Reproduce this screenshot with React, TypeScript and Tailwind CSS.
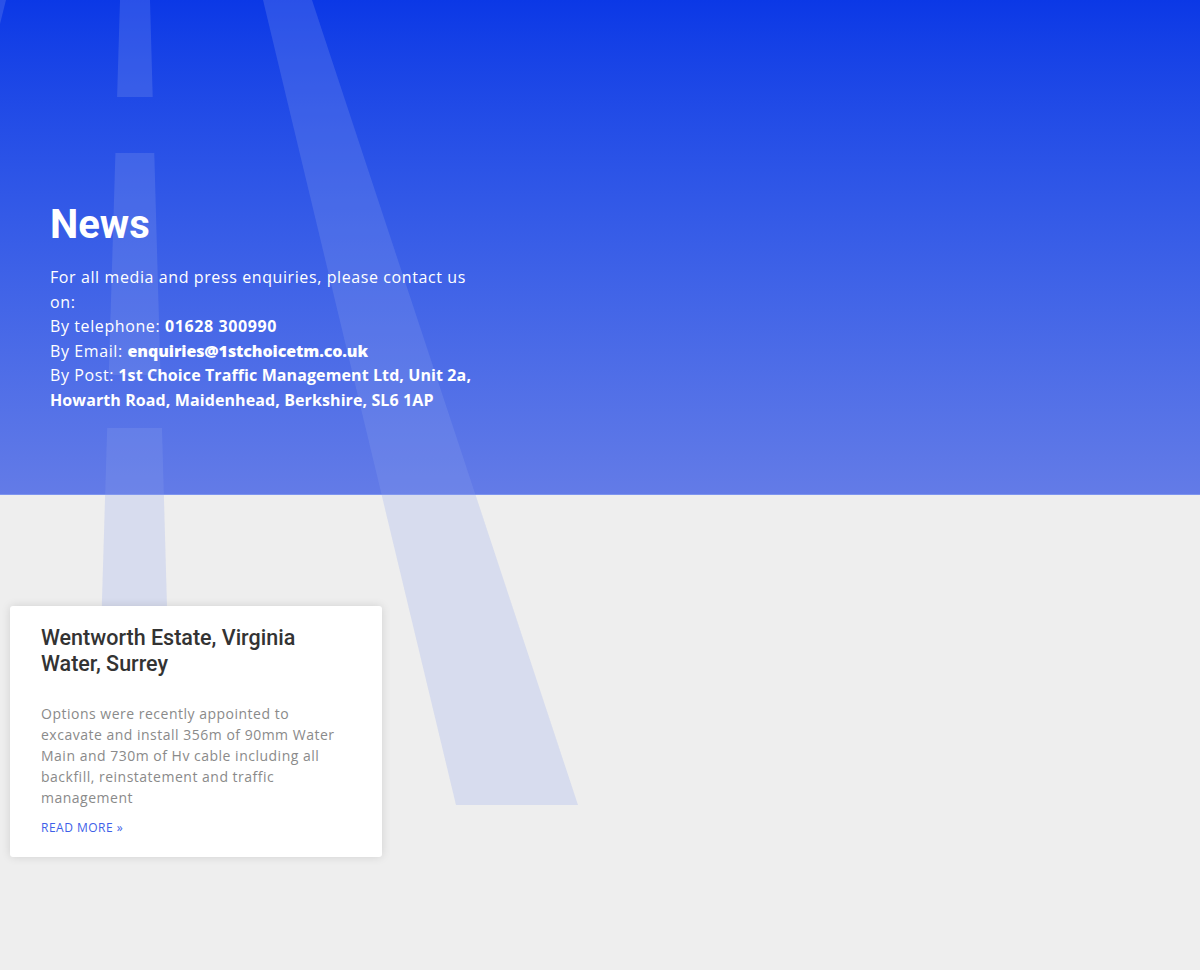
import React from 'react'

const body = { fontFamily: '"Open Sans", "Liberation Sans", sans-serif' }
const heading = { fontFamily: 'Roboto, "Liberation Sans", sans-serif' }

// dashed centre line widens slightly towards the bottom, kerb line runs off to the right
const DASHES: [number, number][] = [
  [0, 97],
  [153, 375],
  [428, 805],
]

function dashPoints(y1: number, y2: number) {
  const l = (y: number) => 120 - 0.03 * y
  const r = (y: number) => 150 + 0.028 * y
  return `${l(y1)},${y1} ${r(y1)},${y1} ${r(y2)},${y2} ${l(y2)},${y2}`
}

function RoadMarkings() {
  return (
    <svg
      className="pointer-events-none absolute left-0 top-0"
      width="600"
      height="805"
      viewBox="0 0 600 805"
    >
      <g fill="rgba(143,164,238,0.24)">
        {DASHES.map(([a, b]) => (
          <polygon key={a} points={dashPoints(a, b)} />
        ))}
        <polygon points="263,0 312,0 578,805 456,805" />
        <polygon points="0,0 6,0 0,24" />
      </g>
    </svg>
  )
}

export default function App() {
  return (
    <div className="relative min-h-[970px] bg-[#eeeeee]" style={body}>
      <section className="h-[495px] border-b border-[#7d94ee] bg-gradient-to-b from-[#0b38e6] to-[#637be7]" />
      <RoadMarkings />

      <div className="absolute left-0 top-[201px] w-[492px] pl-[50px] text-white">
        <h1 className="mb-[16px] text-[40px] font-bold leading-[48px]" style={heading}>
          News
        </h1>
        <div className="text-[16px] leading-[24.5px] tracking-[0.6px]">
          <p>For all media and press enquiries, please contact us on:</p>
          <p>
            By telephone: <strong className="font-bold">01628 300990</strong>
          </p>
          <p>
            By Email:{' '}
            <strong className="font-extrabold tracking-[-0.1px]">enquiries@1stchoicetm.co.uk</strong>
          </p>
          <p className="font-bold tracking-[0.1px]">
            <span className="font-normal tracking-[0.6px]">By Post:</span> 1st Choice Traffic
            Management Ltd, Unit 2a, Howarth Road, Maidenhead, Berkshire, SL6 1AP
          </p>
        </div>
      </div>

      <div className="relative pl-[10px] pt-[111px]">
        <article className="w-[372px] rounded-[3px] bg-white px-[31px] pb-[20px] pt-[19px] shadow-[0_0_10px_rgba(0,0,0,0.12)]">
          <h3 className="text-[21.5px] font-medium leading-[26px] text-[#333333]" style={heading}>
            Wentworth Estate, Virginia Water, Surrey
          </h3>
          <p className="mt-[26px] text-[14px] leading-[21px] tracking-[0.5px] text-[#8a8a8a]">
            Options were recently appointed to excavate and install 356m of 90mm Water Main and
            730m of Hv cable including all backfill, reinstatement and traffic management
          </p>
          <a
            href="#"
            className="mt-[11px] block text-[12px] font-medium leading-[18px] tracking-[0.5px] text-[#3e5fe8]"
          >
            READ MORE »
          </a>
        </article>
      </div>
    </div>
  )
}
